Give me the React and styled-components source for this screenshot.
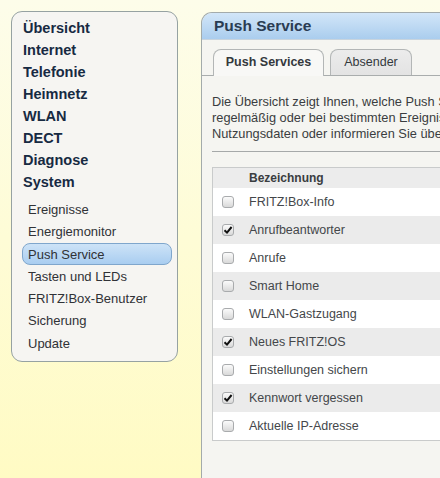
import React from "react";
import styled, { createGlobalStyle } from "styled-components";

const GlobalStyle = createGlobalStyle`
  html, body {
    margin: 0;
    padding: 0;
    overflow: hidden;
  }
  body {
    font-family: "Liberation Sans", Arial, sans-serif;
  }
`;

const MAIN_MENU = ["Übersicht", "Internet", "Telefonie", "Heimnetz", "WLAN", "DECT", "Diagnose", "System"];

const SUB_MENU = [
  "Ereignisse",
  "Energiemonitor",
  "Push Service",
  "Tasten und LEDs",
  "FRITZ!Box-Benutzer",
  "Sicherung",
  "Update",
];

const SERVICES = [
  { name: "FRITZ!Box-Info", checked: false },
  { name: "Anrufbeantworter", checked: true },
  { name: "Anrufe", checked: false },
  { name: "Smart Home", checked: false },
  { name: "WLAN-Gastzugang", checked: false },
  { name: "Neues FRITZ!OS", checked: true },
  { name: "Einstellungen sichern", checked: false },
  { name: "Kennwort vergessen", checked: true },
  { name: "Aktuelle IP-Adresse", checked: false },
];

function Checkbox({ checked }) {
  return (
    <Box>
      {checked && (
        <svg width="10" height="10" viewBox="0 0 10 10">
          <path d="M1.5 5.2 L4 7.6 L8.6 2" fill="none" stroke="#111" strokeWidth="2" />
        </svg>
      )}
    </Box>
  );
}

function App() {
  return (
    <Page>
      <GlobalStyle />
      <Nav>
        {MAIN_MENU.map((item) => (
          <MainItem key={item}>{item}</MainItem>
        ))}
        <SubList>
          {SUB_MENU.map((item) => (
            <SubItem key={item} $active={item === "Push Service"}>
              {item}
            </SubItem>
          ))}
        </SubList>
      </Nav>
      <Panel>
        <PanelHeader>Push Service</PanelHeader>
        <PanelBody>
          <Tabs>
            <Tab $active>Push Services</Tab>
            <Tab>Absender</Tab>
          </Tabs>
          <Content>
            <Intro>
              Die Übersicht zeigt Ihnen, welche Push Services eingerichtet sind. Push Services senden Ihnen
              <br />
              regelmäßig oder bei bestimmten Ereignissen E-Mails. Diese enthalten beispielsweise
              <br />
              Nutzungsdaten oder informieren Sie über wichtige Ereignisse.
            </Intro>
            <Rule />
            <Table>
              <HeadRow>
                <CheckCell />
                <HeadCell>Bezeichnung</HeadCell>
              </HeadRow>
              {SERVICES.map((s, i) => (
                <Row key={s.name} $shaded={i % 2 === 1}>
                  <CheckCell>
                    <Checkbox checked={s.checked} />
                  </CheckCell>
                  <NameCell>{s.name}</NameCell>
                </Row>
              ))}
            </Table>
          </Content>
          <Footer />
        </PanelBody>
      </Panel>
    </Page>
  );
}

export default App;

const Page = styled.div`
  width: 440px;
  height: 478px;
  display: flex;
  align-items: flex-start;
  padding: 11px 0 0 11px;
  box-sizing: border-box;
  overflow: hidden;
  background: linear-gradient(180deg, #fdfdea 0%, #fefcd6 50%, #fffbc4 100%);
`;

const Nav = styled.div`
  flex: none;
  width: 167px;
  height: 351px;
  box-sizing: border-box;
  padding: 5px 5px 0 10px;
  background: #f6f5f2;
  border: 1px solid #96a2a2;
  border-radius: 11px;
`;

const MainItem = styled.div`
  height: 22px;
  line-height: 22px;
  font-size: 14.5px;
  font-weight: bold;
  color: #172a42;
  padding-left: 1px;
`;

const SubList = styled.div`
  margin-top: 5px;
`;

const SubItem = styled.div`
  height: 22px;
  line-height: 21px;
  margin-bottom: 0.3px;
  box-sizing: border-box;
  width: 150px;
  padding-left: 5px;
  font-size: 13px;
  color: #303236;
  border-radius: 8px;
  border: 1px solid ${({ $active }) => ($active ? "#7fa6cc" : "transparent")};
  background: ${({ $active }) => ($active ? "linear-gradient(180deg, #cde3f7 0%, #a9cdf0 100%)" : "transparent")};
`;

const Panel = styled.div`
  flex: none;
  width: 300px;
  margin: 1px 0 0 23px;
  height: 480px;
  display: flex;
  flex-direction: column;
  border: 1px solid #a3abab;
  border-right: none;
  border-radius: 11px 0 0 0;
  overflow: hidden;
  background: #f5f5f1;
`;

const PanelHeader = styled.div`
  height: 26px;
  line-height: 26px;
  padding-left: 12px;
  font-size: 15.5px;
  font-weight: bold;
  color: #2a3c52;
  background: linear-gradient(180deg, #d2e6f8 0%, #aacdee 100%);
  border-bottom: 1px solid #c8d4de;
`;

const PanelBody = styled.div`
  flex: 1;
  display: flex;
  flex-direction: column;
`;

const Tabs = styled.div`
  display: flex;
  gap: 6px;
  margin-top: 9px;
  padding-left: 11px;
  border-bottom: 1px solid #a9adad;
  height: 26px;
`;

const Tab = styled.div`
  box-sizing: border-box;
  height: ${({ $active }) => ($active ? "27px" : "26px")};
  width: ${({ $active }) => ($active ? "111px" : "82px")};
  line-height: 25px;
  font-size: 12.5px;
  font-weight: ${({ $active }) => ($active ? "bold" : "normal")};
  color: #34393d;
  border: 1px solid #b3b6b6;
  border-bottom: none;
  border-radius: 8px 8px 0 0;
  background: ${({ $active }) => ($active ? "#f8f8f6" : "linear-gradient(180deg, #ececec 0%, #e3e3e3 100%)")};
  text-align: center;
  white-space: nowrap;
`;

const Content = styled.div`
  padding: 18px 0 0 10px;
  flex: 1;
`;

const Intro = styled.p`
  margin: 0;
  white-space: nowrap;
  font-size: 12.8px;
  line-height: 16px;
  color: #3a3d40;
`;

const Rule = styled.div`
  height: 1px;
  background: #a6a9a9;
  margin: 9px 0 15px 0;
`;

const Table = styled.div`
  border: 1px solid #c9cbcb;
  border-right: none;
  background: #fff;
`;

const HeadRow = styled.div`
  display: flex;
  align-items: center;
  height: 20px;
  background: #ececec;
`;

const Row = styled.div`
  display: flex;
  align-items: center;
  height: 28px;
  background: ${({ $shaded }) => ($shaded ? "#ebebeb" : "#ffffff")};
`;

const CheckCell = styled.div`
  width: 36px;
  padding-left: 9px;
  box-sizing: border-box;
  display: flex;
  align-items: center;
`;

const HeadCell = styled.div`
  font-size: 12px;
  font-weight: bold;
  color: #3a3d40;
`;

const NameCell = styled.div`
  font-size: 12.5px;
  color: #44474a;
`;

const Box = styled.div`
  width: 12px;
  height: 12px;
  box-sizing: border-box;
  border: 1px solid #a9abad;
  border-radius: 3px;
  background: linear-gradient(180deg, #fbfbfb 0%, #d9d9d9 100%);
  display: flex;
  align-items: center;
  justify-content: center;
`;

const Footer = styled.div`
  height: 12px;
  border-top: 1px solid #b0b3b3;
  background: #f1f1ee;
  margin-top: auto;
`;
